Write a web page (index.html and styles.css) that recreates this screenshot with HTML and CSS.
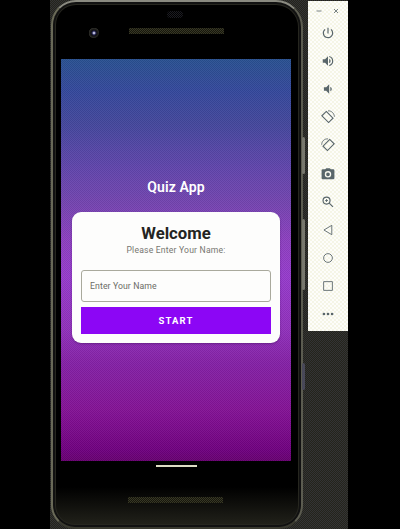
FILE: index.html
```html
<!DOCTYPE html>
<html lang="en">
<head>
<meta charset="utf-8">
<title>Quiz App</title>
<link rel="stylesheet" href="styles.css">
</head>
<body>
<div class="desktop">
  <div class="phone">
    <i class="key power"></i><i class="key volume"></i><i class="key lower"></i>
    <header class="top-bezel"><span class="sensor"></span><span class="camera"></span><span class="speaker"></span></header>
    <main class="screen">
      <h1 class="app-title">Quiz App</h1>
      <section class="card">
        <h2 class="welcome">Welcome</h2>
        <p class="prompt">Please Enter Your Name:</p>
        <div class="field">Enter Your Name</div>
        <div class="start">START</div>
      </section>
    </main>
    <footer class="bottom-bezel"><span class="home-bar"></span><span class="speaker low"></span></footer>
  </div>
  <aside class="toolbar">
    <div class="window-controls">
      <svg width="6" height="6" viewBox="0 0 6 6"><path d="M.5 3h5"/></svg>
      <svg width="6" height="6" viewBox="0 0 6 6"><path d="M1 1l4 4M5 1L1 5"/></svg>
    </div>
    <div class="tool"><svg viewBox="0 0 24 24"><path class="solid" d="M13 3h-2v10h2V3zm4.830 2.170l-1.420 1.420A6.920 6.920 0 0 1 19 12a7 7 0 1 1-11.420-5.420L6.170 5.170A9 9 0 1 0 21 12a8.940 8.940 0 0 0-3.170-6.830z"/></svg></div>
    <div class="tool"><svg viewBox="0 0 24 24"><path class="solid" d="M3 9v6h4l5 5V4L7 9H3zm13.500 3A4.500 4.500 0 0 0 14 7.970v8.050A4.500 4.500 0 0 0 16.500 12zM14 3.230v2.060a7 7 0 0 1 0 13.420v2.060a9 9 0 0 0 0-17.540z"/></svg></div>
    <div class="tool"><svg viewBox="0 0 24 24"><path class="solid" d="M5 9v6h4l5 5V4L9 9H5zm13.500 3A4.500 4.500 0 0 0 16 7.970v8.050A4.500 4.500 0 0 0 18.500 12z"/></svg></div>
    <div class="tool"><svg viewBox="0 0 24 24"><path d="M9 2.500L20.500 14 13 21.500 1.500 10z"/><path class="thin" d="M12 1.500c6-.5 10.500 4 11 10"/></svg></div>
    <div class="tool"><svg viewBox="0 0 24 24"><path d="M15 2.500L3.500 14l7.500 7.500L22.500 10z"/><path class="thin" d="M12 1.500c-6-.5-10.500 4-11 10"/></svg></div>
    <div class="tool"><svg viewBox="0 0 24 24"><path class="solid" fill-rule="evenodd" d="M9 2L7.170 4H3a2 2 0 0 0-2 2v13a2 2 0 0 0 2 2h18a2 2 0 0 0 2-2V6a2 2 0 0 0-2-2h-4.170L15 2H9zm3 5a5.500 5.500 0 1 1 0 11 5.500 5.500 0 0 1 0-11zm0 2.300a3.200 3.200 0 1 0 0 6.400 3.200 3.200 0 0 0 0-6.400z"/></svg></div>
    <div class="tool"><svg viewBox="0 0 24 24"><circle cx="9.500" cy="9.500" r="6"/><path d="M14 14l6.500 6.500"/><path class="thin" d="M7 9.500h5M9.500 7v5"/></svg></div>
    <div class="tool"><svg viewBox="0 0 24 24"><path class="thin" d="M18.500 4v16L5 12z"/></svg></div>
    <div class="tool"><svg viewBox="0 0 24 24"><circle class="thin" cx="12" cy="12" r="7.500"/></svg></div>
    <div class="tool"><svg viewBox="0 0 24 24"><path class="thin" d="M4.500 4.500h15v15h-15z"/></svg></div>
    <div class="tool"><svg viewBox="0 0 24 24"><g class="solid"><circle cx="5" cy="12" r="2.300"/><circle cx="12" cy="12" r="2.300"/><circle cx="19" cy="12" r="2.300"/></g></svg></div>
  </aside>
</div>
</body>
</html>
```
FILE: styles.css
```css
* { box-sizing: border-box; }
body { margin: 0; background: #000; font-family: Roboto, sans-serif; overflow: hidden; }
.desktop {
  width: 298px; height: 529px; margin-left: 50px; padding-left: 1px;
  display: flex; align-items: flex-start; gap: 5px;
  background: repeating-conic-gradient(#24241b 0 25%, #333335 0 50%) 0 0 / 2px 2px;
}
.phone {
  position: relative; width: 252px; height: 529px; padding: 0 8px 0 7px;
  border: 2px solid; border-color: #8a8a80 #5c5c50 #3a3a30 #6a6a58;
  border-radius: 25px 27px 24px 24px;
  background: linear-gradient(#000 0 485px, #25251d 527px);
  box-shadow: inset 0 0 0 2px #111, inset 0 0 0 3px #26261f;
}
.top-bezel { position: relative; height: 57px; padding: 26px 0 0 69px; }
.speaker {
  display: block; width: 95px; height: 6px;
  background: repeating-conic-gradient(#383824 0 25%, #16160e 0 50%) 0 0 / 2px 2px;
}
.camera {
  position: absolute; left: 28px; top: 25px; width: 11px; height: 11px; border-radius: 50%;
  background: radial-gradient(circle at 6px 6px, #b8b8d8 0 1px, #202050 1.8px, #111 3px, #2d2d28 5px, #000 5.500px);
}
.sensor {
  position: absolute; left: 107px; top: 9px; width: 16px; height: 7px; border-radius: 4px;
  background: repeating-conic-gradient(#1c1c22 0 25%, #000 0 50%) 0 0 / 2px 2px;
}
.screen {
  width: 230px; height: 402px; margin-left: 1px; padding: 119px 11px 0;
  background:
    repeating-conic-gradient(#ffffff0d 0 25%, #0000000d 0 50%) 0 0 / 2px 2px,
    linear-gradient(#285090 0, #34489c 8%, #43479c 16%, #6045ac 27%, #7443b0 36%, #8c3fc0 45%, #963bcc 54%, #9030bc 67%, #8420a5 76%, #841296 87%, #700080 97%, #660070 100%);
  display: flex; flex-direction: column;
}
.app-title { margin: 0; text-align: center; color: #fff; font-size: 14px; line-height: 18px; font-weight: 600; letter-spacing: .1px; }
.card {
  height: 131px; margin-top: 16px; padding: 12px 9px 0; border-radius: 9px;
  background: #fdfdfc; box-shadow: 0 1px 2px #35105066;
}
.welcome { margin: 0; text-align: center; color: #242422; font-size: 16.700px; line-height: 19px; font-weight: 700; }
.prompt { margin: 2px 0 0; text-align: center; color: #777771; font-size: 8.600px; line-height: 11px; letter-spacing: .2px; }
.field {
  height: 32px; margin-top: 14px; padding: 0 8px; display: flex; align-items: center;
  border: 1px solid #a9a99c; border-radius: 3px; color: #6c6c66; font-size: 8.700px; letter-spacing: .1px;
}
.start {
  height: 27px; margin-top: 5px; display: flex; align-items: center; justify-content: center;
  background: #8c06f5; color: #fff; font-size: 9.500px; font-weight: 700; letter-spacing: 1.100px;
}
.bottom-bezel { display: flex; flex-direction: column; align-items: center; padding-top: 4px; }
.home-bar { width: 41px; height: 2px; background: #ddddc4; }
.low { margin-top: 30px; margin-right: 3px; }
.key { position: absolute; right: -4px; width: 3px; border-radius: 2px; background: #77776d; }
.power { top: 135px; height: 37px; }
.volume { top: 217px; height: 71px; }
.lower { top: 361px; height: 27px; background: #484858; }
.toolbar {
  width: 40px; height: 330px; margin-top: 1px;
  background: repeating-conic-gradient(#fdfdfa 0 25%, #f5f5e6 0 50%) 0 0 / 4px 4px;
}
.window-controls { height: 18px; padding: 7px 9px 0 8px; display: flex; justify-content: space-between; }
.tool { height: 28.100px; display: flex; align-items: center; justify-content: center; }
.tool svg { width: 14px; height: 14px; }
svg { fill: none; stroke: #59666a; stroke-width: 2; overflow: visible; }
.window-controls svg { stroke-width: .8; }
.thin { stroke-width: 1.500; }
.solid { fill: #59666a; stroke: none; }
```
